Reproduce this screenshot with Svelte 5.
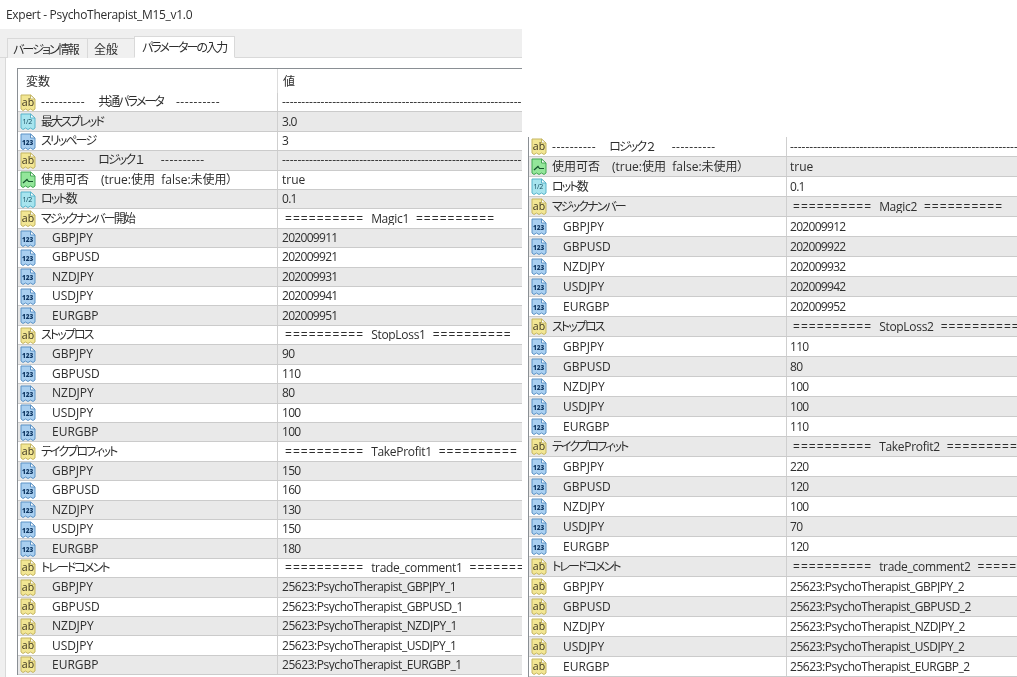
<script>
  const pairs = ['GBPJPY', 'GBPUSD', 'NZDJPY', 'USDJPY', 'EURGBP'];
  const dash = '-'.repeat(120);
  const group = (title, tag, values, icon = 'int', kind = 'num', fmt = (v) => v) => [
    { icon: 'ab', name: title, jp: true, tag, kind: 'sep' },
    ...pairs.map((p, i) => ({ icon, name: p, sub: true, value: fmt(values[i], p), kind }))
  ];
  const section = (title, wide = false) => ({ icon: 'ab', title, wide, value: dash, kind: 'dash' });
  const logicHead = (title, lots) => [
    section(title, true),
    { icon: 'bool', name: '使用可否　(true:使用  false:未使用）', value: 'true' },
    { icon: 'dbl', name: 'ロット数', jp: true, value: lots, kind: 'num' }
  ];
  const comment = (n) => (_, p) => `25623:PsychoTherapist_${p}_${n}`;

  const left = [
    section('共通パラメータ'),
    { icon: 'dbl', name: '最大スプレッド', jp: true, value: '3.0', kind: 'num' },
    { icon: 'int', name: 'スリッページ', jp: true, value: '3', kind: 'num' },
    ...logicHead('ロジック １', '0.1'),
    ...group('マジックナンバー開始', 'Magic1', [202009911, 202009921, 202009931, 202009941, 202009951]),
    ...group('ストップロス', 'StopLoss1', [90, 110, 80, 100, 100]),
    ...group('テイクプロフィット', 'TakeProfit1', [150, 160, 130, 150, 180]),
    ...group('トレードコメント', 'trade_comment1', pairs, 'ab', 'text', comment(1))
  ];
  const right = [
    ...logicHead('ロジック ２', '0.1'),
    ...group('マジックナンバー', 'Magic2', [202009912, 202009922, 202009932, 202009942, 202009952]),
    ...group('ストップロス', 'StopLoss2', [110, 80, 100, 100, 110]),
    ...group('テイクプロフィット', 'TakeProfit2', [220, 120, 100, 70, 120]),
    ...group('トレードコメント', 'trade_comment2', pairs, 'ab', 'text', comment(2))
  ];
  const shape = 'M1 1H10.5L15 5V15L13 16.5L10.5 15L8 16.5L5.5 15L3 16.5L1 15Z';
</script>

{#snippet icon(kind)}
  <svg class="icon {kind}" width="16" height="17" viewBox="0 0 16 17" aria-hidden="true">
    <path class="sheet" d={shape} />
    <path class="fold" d="M10.5 1V5H15Z" />
    {#if kind === 'ab'}
      <text x="1.8" y="12" class="t-ab">ab</text>
    {:else if kind === 'int'}
      <text x="2" y="11.6" class="t-int">123</text>
    {:else if kind === 'dbl'}
      <text x="2.4" y="10.6" class="t-dbl">1/2</text>
    {:else}
      <path class="line" d="M3 12L7 8.5L8.5 10.5H13" />
    {/if}
  </svg>
{/snippet}

{#snippet rows(list)}
  {#each list as r}
    <div class="row">
      <div class="name" class:sub={r.sub}>
        {@render icon(r.icon)}
        {#if r.title}
          <span class="sect"><i>----------</i><b class:wide={r.wide}>{r.title}</b><i>----------</i></span>
        {:else}
          <span class:jp={r.jp}>{r.name}</span>
        {/if}
      </div>
      <div class="value {r.kind ?? ''}">
        {#if r.tag}<i class="eq">==========</i><span class="tag">{r.tag}</span><i class="eq">==========</i>{:else}{r.value}{/if}
      </div>
    </div>
  {/each}
{/snippet}

<div class="page">
  <section class="win">
    <div class="title">Expert - PsychoTherapist_M15_v1.0</div>
    <div class="tabs">
      <div class="tab first"><span class="jp">バージョン情報</span></div>
      <div class="tab second">全般</div>
      <div class="tab active"><span class="jp">パラメーターの入力</span></div>
    </div>
    <div class="body">
      <div class="table">
        <div class="head">
          <div class="h-name">変数</div>
          <div class="h-value">値</div>
        </div>
        <div class="list">
          {@render rows(left)}
        </div>
      </div>
    </div>
  </section>
  <section class="shot">
    {@render rows(right)}
  </section>
</div>

<style>
  :global(body) {
    margin: 0;
    background: #fff;
  }
  .page {
    width: 1017px;
    height: 677px;
    overflow: hidden;
    display: flex;
    gap: 6px;
    color: #2e2e2e;
    font: 12px/1 "Open Sans", "Noto Sans CJK JP", sans-serif;
    font-feature-settings: "palt";
    filter: blur(0.3px);
  }
  .jp {
    letter-spacing: -1.9px;
  }
  .win {
    width: 522px;
    flex: none;
    display: flex;
    flex-direction: column;
    overflow: hidden;
  }
  .title {
    height: 29px;
    box-sizing: border-box;
    padding: 9px 0 0 6px;
    letter-spacing: -0.3px;
  }
  .tabs {
    height: 29px;
    flex: none;
    box-sizing: border-box;
    background: #efefef;
    border-bottom: 1px solid #d9d9d9;
    padding: 8px 0 0 7px;
    display: flex;
    align-items: flex-end;
  }
  .tab {
    box-sizing: border-box;
    height: 20px;
    margin-bottom: -1px;
    padding-top: 5px;
    white-space: nowrap;
    background: #f0f0f0;
    border: 1px solid #d9d9d9;
    border-bottom: 0;
  }
  .first { width: 80px; border-right: 0; padding-left: 5px; }
  .second { width: 47px; border-right: 0; padding-left: 6px; }
  .active {
    width: 101px;
    height: 22px;
    padding-left: 7px;
    background: #fff;
    border-bottom: 1px solid #fff;
  }
  .body {
    flex: 1;
    background: #fff;
    margin-left: 5px;
    border-left: 1px solid #d9d9d9;
    padding: 10px 0 0 11px;
    box-shadow: -5px 0 0 #f0f0f0;
  }
  .table {
    border-left: 1px solid #8a8f94;
    border-top: 1px solid #8a8f94;
    margin-right: -40px;
  }
  .head {
    height: 24px;
    display: grid;
    grid-template-columns: 260px 1fr;
  }
  .h-name {
    padding: 7px 0 0 8px;
    border-right: 1px solid #dcdcdc;
  }
  .h-value {
    padding: 7px 0 0 5px;
  }
  .list {
    --row-h: 19.41px;
    --col: 260px;
    --pad: 4px;
  }
  .shot {
    flex: 1;
    margin-top: 137px;
    border-left: 1px solid #8a8f94;
    overflow: hidden;
    --row-h: 20px;
    --col: 258px;
    --pad: 3px;
  }
  .row {
    height: var(--row-h);
    box-sizing: border-box;
    display: grid;
    grid-template-columns: var(--col) 1fr;
    border-bottom: 1.5px solid #cbcbcb;
    white-space: pre;
  }
  .row:nth-child(even) {
    background: #e9e9e9;
  }
  .name {
    display: flex;
    align-items: center;
    gap: 5px;
    padding-left: 2px;
    border-right: 1px solid #cfcfcf;
    min-width: 0;
  }
  .name.sub span {
    padding-left: 11px;
  }
  .sect {
    display: flex;
    gap: 13px;
  }
  .sect i {
    font-style: normal;
    letter-spacing: 0.55px;
  }
  .sect b {
    font-weight: 400;
    letter-spacing: -1.9px;
  }
  .sect b.wide {
    margin-right: 5px;
  }
  .value {
    padding-left: var(--pad);
    align-self: center;
    overflow: hidden;
  }
  .value.num { letter-spacing: -0.7px; }
  .value.text { letter-spacing: -0.45px; }
  .value.sep {
    display: flex;
    gap: 7px;
    padding-left: calc(var(--pad) + 3px);
  }
  .eq {
    font-style: normal;
    flex: none;
    letter-spacing: 1.05px;
  }
  .tag {
    flex: none;
    letter-spacing: -0.3px;
  }
  .icon {
    flex: none;
  }
  .sheet, .fold {
    stroke-width: 1;
    stroke-linejoin: round;
  }
  .fold { fill: #fff; }
  .ab .sheet { fill: #f2e693; }
  .ab path { stroke: #c5b663; }
  .int .sheet { fill: #a9cff0; }
  .int path { stroke: #5c93c6; }
  .dbl .sheet { fill: #a7e4ee; }
  .dbl path { stroke: #59b4cb; }
  .bool .sheet { fill: #93e69a; }
  .bool path { stroke: #43a653; }
  .bool .line {
    fill: none;
    stroke: #14532d;
    stroke-width: 1.2;
  }
  text {
    font-family: "Open Sans", sans-serif;
  }
  .t-ab { font-size: 10.5px; fill: #3a3320; }
  .t-int { font-size: 6.5px; font-weight: 800; fill: #123a66; }
  .t-dbl { font-size: 7px; letter-spacing: -0.4px; fill: #134a5c; }
</style>
